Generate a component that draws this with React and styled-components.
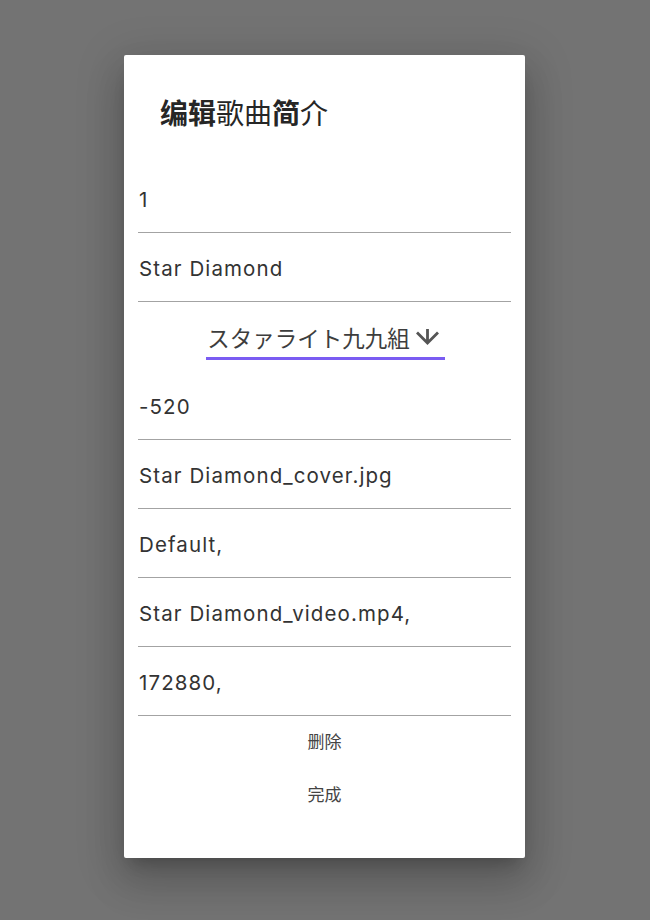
import React from "react";
import styled, { createGlobalStyle } from "styled-components";

const GlobalStyle = createGlobalStyle`
  html, body {
    margin: 0;
    padding: 0;
    background: #737373;
  }
  body {
    font-family: Inter, "Noto Sans CJK SC", sans-serif;
  }
`;

const Backdrop = styled.div`
  min-height: 920px;
  display: flex;
  justify-content: center;
  align-items: flex-start;
  padding-top: 55px;
  box-sizing: border-box;
`;

const Dialog = styled.div`
  width: 401px;
  height: 803px;
  margin-left: -1px;
  background: #fff;
  border-radius: 2px;
  box-shadow: 0 24px 38px 3px rgba(0, 0, 0, 0.14), 0 9px 46px 8px rgba(0, 0, 0, 0.12),
    0 11px 15px -7px rgba(0, 0, 0, 0.2);
  display: flex;
  flex-direction: column;
  box-sizing: border-box;
  padding: 0 14px 36px;
`;

const Title = styled.h2`
  margin: 39px 0 0 22px;
  height: 36px;
  line-height: 36px;
  font-size: 28px;
  font-weight: 400;
  color: #262626;
  font-family: "Noto Sans CJK SC", sans-serif;
`;

const Part = styled.span`
  font-weight: ${(p) => (p.$bold ? 700 : 400)};
`;

const Fields = styled.div`
  margin-top: 34px;
  display: flex;
  flex-direction: column;
`;

const Field = styled.div`
  height: 69px;
  box-sizing: border-box;
  padding: 3px 0 0 1px;
  display: flex;
  align-items: center;
  border-bottom: 1px solid #a3a3a3;
  font-size: 20.5px;
  letter-spacing: 1.1px;
  color: #333;
`;

const SelectRow = styled.div`
  height: 69px;
  display: flex;
  justify-content: center;
  align-items: flex-start;
  padding-left: 2px;
  box-sizing: border-box;
`;

const Select = styled.div`
  margin-top: 18px;
  height: 40px;
  display: inline-flex;
  align-items: center;
  gap: 5px;
  padding: 0 5px 4px 1px;
  box-sizing: border-box;
  border-bottom: 3px solid #7a5cf2;
  font-family: "Noto Sans CJK JP", sans-serif;
  font-size: 22.5px;
  color: #3d3d3d;
`;

const Actions = styled.div`
  margin-top: -2px;
  display: flex;
  flex-direction: column;
  align-items: center;
`;

const ActionButton = styled.button`
  height: 53px;
  width: 100%;
  border: none;
  background: none;
  font-family: "Noto Sans CJK SC", sans-serif;
  font-size: 17px;
  color: #444;
  cursor: pointer;
`;

const DownArrow = () => (
  <svg width="25" height="17" viewBox="0 0 25 17" fill="none">
    <path
      d="M12.5 1V15M2 4.5L12.5 15L23 4.5"
      stroke="#555"
      strokeWidth="2.8"
    />
  </svg>
);

const values = [
  "-520",
  "Star Diamond_cover.jpg",
  "Default,",
  "Star Diamond_video.mp4,",
  "172880,",
];

export default function App() {
  return (
    <>
      <GlobalStyle />
      <Backdrop>
        <Dialog>
          <Title>
            <Part $bold>编辑</Part>
            <Part>歌曲</Part>
            <Part $bold>简</Part>
            <Part>介</Part>
          </Title>
          <Fields>
            <Field>1</Field>
            <Field>Star Diamond</Field>
            <SelectRow>
              <Select>
                <span>スタァライト九九組</span>
                <DownArrow />
              </Select>
            </SelectRow>
            {values.map((v) => (
              <Field key={v}>{v}</Field>
            ))}
          </Fields>
          <Actions>
            <ActionButton>删除</ActionButton>
            <ActionButton>完成</ActionButton>
          </Actions>
        </Dialog>
      </Backdrop>
    </>
  );
}
